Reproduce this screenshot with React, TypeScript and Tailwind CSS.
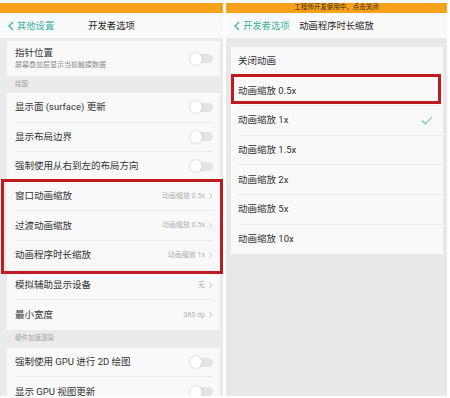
import React from 'react';

const font = { fontFamily: 'Roboto, "Noto Sans CJK SC", sans-serif' };

const Toggle = () => (
  <div className="relative w-[23px] h-[12px] flex items-center">
    <div className="absolute right-0 w-[20px] h-[9px] rounded-full bg-[#e4e4e4]" />
    <div className="absolute left-0 w-[12px] h-[12px] rounded-full bg-white shadow-[0_0_2px_rgba(0,0,0,0.25)]" />
  </div>
);

const Chevron = ({ className = '' }: { className?: string }) => (
  <svg width="5" height="8" viewBox="0 0 5 8" className={className}>
    <path d="M1 1 L4 4 L1 7" fill="none" stroke="currentColor" strokeWidth="0.9" />
  </svg>
);

const BackArrow = () => (
  <svg width="6" height="10" viewBox="0 0 6 10" className="text-[#3bb39a]">
    <path d="M5 1 L1 5 L5 9" fill="none" stroke="currentColor" strokeWidth="1.3" />
  </svg>
);

type Row = { label: string; sub?: string; value?: string; toggle?: boolean };

const SettingRow = ({ row, last }: { row: Row; last?: boolean }) => (
  <div className={`shrink-0 flex items-center pl-[8px] pr-[7px] ${row.sub ? 'h-[35px]' : 'h-[29.6px]'}`}>
    <div className={`flex-1 h-full flex items-center ${last ? '' : 'border-b border-[#ececec]'}`}>
      <div className="flex-1 min-w-0">
        <div className="text-[9.5px] leading-[12px] text-[#333]">{row.label}</div>
        {row.sub && <div className="text-[7px] leading-[10px] text-[#8a8a8a] mt-[1px]">{row.sub}</div>}
      </div>
      {row.toggle && <Toggle />}
      {row.value && (
        <div className="flex items-center gap-[3px] text-[7px] text-[#b0b0b0]">
          <span>{row.value}</span>
          <Chevron className="text-[#c8c8c8]" />
        </div>
      )}
    </div>
  </div>
);

const StatusBar = ({ text }: { text?: string }) => (
  <div className="shrink-0 h-[10px] bg-[#f8a11d] flex items-center justify-center text-[6.5px] text-[#3a2a10]">
    {text}
  </div>
);

const Header = ({ back, title }: { back: string; title: string }) => (
  <div className="shrink-0 h-[25px] bg-[#fafafa] relative flex items-center">
    <div className="flex items-center gap-[3px] pl-[8px] text-[9.3px] text-[#3bb39a]">
      <BackArrow />
      <span>{back}</span>
    </div>
    <div className="absolute inset-0 flex items-center justify-center text-[9.3px] text-[#222] pointer-events-none">{title}</div>
  </div>
);

const drawRows1: Row[] = [
  { label: '显示面 (surface) 更新', toggle: true },
  { label: '显示布局边界', toggle: true },
  { label: '强制使用从右到左的布局方向', toggle: true },
];
const animRows: Row[] = [
  { label: '窗口动画缩放', value: '动画缩放 0.5x' },
  { label: '过渡动画缩放', value: '动画缩放 0.5x' },
  { label: '动画程序时长缩放', value: '动画缩放 1x' },
];
const drawRows2: Row[] = [
  { label: '模拟辅助显示设备', value: '无' },
  { label: '最小宽度', value: '360 dp' },
];
const gpuRows: Row[] = [
  { label: '强制使用 GPU 进行 2D 绘图', toggle: true },
  { label: '显示 GPU 视图更新', toggle: true },
];

const options = ['关闭动画', '动画缩放 0.5x', '动画缩放 1x', '动画缩放 1.5x', '动画缩放 2x', '动画缩放 5x', '动画缩放 10x'];

const App: React.FC = () => {
  return (
    <div className="w-[450px] h-[398px] bg-white flex gap-[3px] pt-[3px] pb-[2px] pr-[3px] overflow-hidden" style={font}>
      {/* left screen */}
      <div className="w-[223px] h-full flex flex-col bg-[#ebebeb] overflow-hidden">
        <StatusBar />
        <Header back="其他设置" title="开发者选项" />
        <div className="shrink-0 pt-[3px] pl-[7px] pr-[3px]">
          <div className="bg-[#f9f9f9]">
            <SettingRow row={{ label: '指针位置', sub: '屏幕叠加层显示当前触摸数据', toggle: true }} last />
          </div>
          <div className="h-[17px] flex items-center pl-[8px] text-[6.5px] text-[#a0a0a0]">绘图</div>
          <div className="bg-[#f9f9f9]">
            {drawRows1.map(r => <SettingRow key={r.label} row={r} />)}
            <div className="relative">
              {animRows.map(r => <SettingRow key={r.label} row={r} />)}
              <div className="absolute top-[-3px] bottom-[-3px] left-[-6px] right-[-3px] border-[3px] border-[#bf1a1f]" />
            </div>
            {drawRows2.map((r, i) => <SettingRow key={r.label} row={r} last={i === drawRows2.length - 1} />)}
          </div>
          <div className="h-[18px] flex items-center pl-[8px] text-[6.5px] text-[#a0a0a0]">硬件加速渲染</div>
          <div className="bg-[#f9f9f9]">
            {gpuRows.map(r => <SettingRow key={r.label} row={r} />)}
          </div>
        </div>
      </div>

      {/* right screen */}
      <div className="flex-1 h-full flex flex-col bg-[#e8e8e8] overflow-hidden">
        <StatusBar text="工程师开发使用中，点击关闭" />
        <Header back="开发者选项" title="动画程序时长缩放" />
        <div className="flex-1 pt-[9px] pl-[5px] pr-[4px]">
          <div className="bg-[#f9f9f9]">
            {options.map((o, i) => (
              <div key={o} className="relative h-[29.6px] flex items-center pl-[7px]">
                <div className={`flex-1 h-full flex items-center pr-[10px] ${i < options.length - 1 ? 'border-b border-[#ececec]' : ''}`}>
                  <span className="flex-1 text-[9.5px] text-[#333]">{o}</span>
                  {i === 2 && (
                    <svg width="12" height="9" viewBox="0 0 12 9" className="text-[#6cc7b0]">
                      <path d="M1 4.5 L4.5 8 L11 1" fill="none" stroke="currentColor" strokeWidth="1.1" />
                    </svg>
                  )}
                </div>
                {i === 1 && <div className="absolute top-[-3px] bottom-[2px] left-0 right-[2px] border-[3px] border-[#bf1a1f]" />}
              </div>
            ))}
          </div>
        </div>
      </div>
    </div>
  );
};

export default App;
